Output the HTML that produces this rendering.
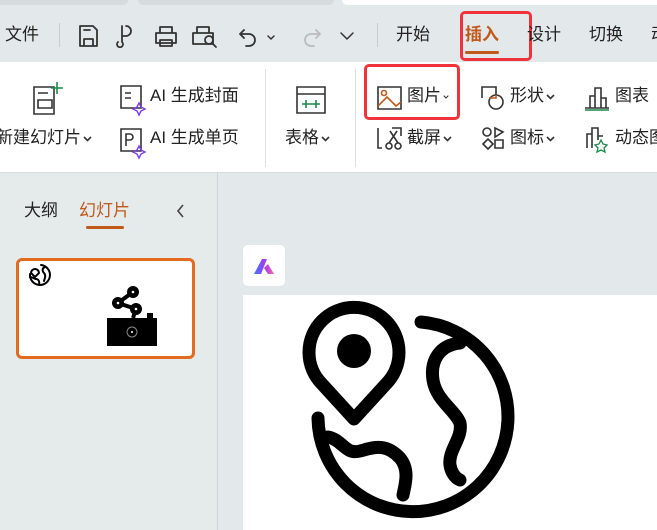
<!DOCTYPE html>
<html><head><meta charset="utf-8"><style>
*{margin:0;padding:0;box-sizing:border-box}
body{width:657px;height:530px;overflow:hidden;background:#e3e8ea;font-family:"Liberation Sans","Noto Sans CJK SC",sans-serif;position:relative;color:#222}
.a{position:absolute;white-space:nowrap}
.t{font-size:17px;line-height:22px}
.c{display:inline-block;width:9px;height:6px;margin-left:2px;vertical-align:middle}
</style></head><body>
<div class="a" style="left:0;top:0;width:128px;height:5px;background:#d6dbde;border-radius:0 0 6px 0"></div>
<div class="a" style="left:138px;top:0;width:196px;height:5px;background:#d6dbde;border-radius:0 0 6px 6px"></div>
<div class="a" style="left:342px;top:0;width:315px;height:5px;background:#fff;border-radius:0 0 0 6px"></div>
<!-- toolbar -->
<div class="a t" style="left:5px;top:24px">文件</div>
<div class="a" style="left:59px;top:23px;width:1px;height:24px;background:#c8cdd0"></div>
<svg class="a" style="left:76px;top:22px" width="290" height="28" fill="none" stroke="#333" stroke-width="1.8" stroke-linecap="round" stroke-linejoin="round">
<path d="M4 4h13l4 4v16H4z M8 24v-7h9v7 M8 8h6"/>
<path d="M50 4a5 5 0 0 1 0 10h-4v6a3 3 0 1 1-4 0 M46 14V4"/>
<path d="M84 5h12v6 M84 11V5 M80 11h20v10H80z M84 18h12v6H84z"/>
<path d="M121 5h12v6 M121 11V5 M117 11h20v11h-20z"/><circle cx="133" cy="18" r="4" stroke="#333"/><path d="M136 21l4 4" stroke="#333"/>
<path d="M168 8l-4 4 4 4 M164 12h9a6 6 0 0 1 0 12h-3"/><path d="M192 14l3 3 3-3" stroke-width="1.5"/>
<path d="M240 8l4 4-4 4 M244 12h-9a6 6 0 0 0 0 12h3" stroke="#bbb"/>
<path d="M265 11l6 6 6-6" stroke-width="1.5"/>
</svg>
<div class="a" style="left:377px;top:23px;width:1px;height:24px;background:#c8cdd0"></div>
<div class="a t" style="left:396px;top:24px">开始</div>
<div class="a t" style="left:465px;top:24px;color:#c0591a;font-weight:bold">插入</div>
<div class="a" style="left:465px;top:51px;width:34px;height:3px;background:#c0591a;border-radius:2px"></div>
<div class="a" style="left:460px;top:11px;width:72px;height:50px;border:3px solid #f0333a;border-radius:5px"></div>
<div class="a t" style="left:527px;top:24px">设计</div>
<div class="a t" style="left:589px;top:24px">切换</div>
<div class="a t" style="left:651px;top:24px">动</div>
<!-- ribbon -->
<div class="a" style="left:0;top:62px;width:657px;height:111px;background:#fff;border-bottom:1px solid #d8dcde"></div>
<svg class="a" style="left:0;top:62px" width="657" height="111" fill="none" stroke="#333" stroke-width="1.6">
<path d="M34 25h20v27H34z M38 31h10 M38 38h14v8H38z"/><path d="M57 20v12 M51 26h12" stroke="#1a8a4a"/>
<path d="M121 24h20v22h-20z M125 31h6 M125 36h6"/><path d="M139 41l2 4 4 2-4 2-2 4-2-4-4-2 4-2z" stroke="#7a3cf0" stroke-width="1.4"/>
<path d="M121 67h20v22h-20z M126 84V72h4a3 3 0 0 1 0 6h-4"/><path d="M139 84l2 4 4 2-4 2-2 4-2-4-4-2 4-2z" stroke="#7a3cf0" stroke-width="1.4"/>
<path d="M297 25h28v26h-28z M297 32h28"/><path d="M302 42h18 M306 38v8 M316 38v8" stroke="#1a8a4a"/>
<path d="M378 25h23v22h-23z"/><circle cx="384" cy="31" r="2.5" stroke="#c0591a"/><path d="M378 44l9-9 9 9 5-4" stroke="#c0591a"/>
<path d="M482 36v-11h14v8"/><circle cx="496" cy="40" r="7"/><path d="M489 36h7v-3" stroke="#c0591a"/>
<path d="M585 46h24 M590 46V34h5v12 M595 46V26h6v20 M601 46V36h5v10"/><path d="M585 48h24" stroke="#1a8a4a"/>
<path d="M378 66v20h4 M392 66h9v8"/><circle cx="389" cy="84" r="3"/><circle cx="398" cy="84" r="3"/><path d="M389 81l8-12 M398 81l-8-12"/>
<circle cx="487" cy="70" r="4"/><path d="M495 66l8 4-8 5z M483 82l5-5 5 5-5 5z M495 78h8v8h-8z"/>
<path d="M587 86V72h5v14 M592 80v-14h6v12 M598 74h5"/><path d="M601 78l2 4 4 1-3 3 1 4-4-2-4 2 1-4-3-3 4-1z" stroke="#1a8a4a" stroke-width="1.3"/>
</svg>
<div class="a t" style="left:-4px;top:127px">新建幻灯片<svg class="c" viewBox="0 0 9 6"><path d="M1 1l3.5 3.5L8 1" fill="none" stroke="#333" stroke-width="1.6"/></svg></div>
<div class="a t" style="left:150px;top:85px">AI 生成封面</div>
<div class="a t" style="left:150px;top:127px">AI 生成单页</div>
<div class="a" style="left:265px;top:69px;width:1px;height:98px;background:#dde0e2"></div>
<div class="a t" style="left:285px;top:127px">表格<svg class="c" viewBox="0 0 9 6"><path d="M1 1l3.5 3.5L8 1" fill="none" stroke="#333" stroke-width="1.6"/></svg></div>
<div class="a" style="left:355px;top:69px;width:1px;height:98px;background:#dde0e2"></div>
<div class="a t" style="left:407px;top:85px">图片<svg class="c" style="width:6px" viewBox="0 0 9 6"><path d="M1 1l3.5 3.5L8 1" fill="none" stroke="#333" stroke-width="1.6"/></svg></div>
<div class="a" style="left:364px;top:64px;width:96px;height:56px;border:3px solid #f0333a;border-radius:5px"></div>
<div class="a t" style="left:407px;top:127px">截屏<svg class="c" viewBox="0 0 9 6"><path d="M1 1l3.5 3.5L8 1" fill="none" stroke="#333" stroke-width="1.6"/></svg></div>
<div class="a t" style="left:510px;top:85px">形状<svg class="c" viewBox="0 0 9 6"><path d="M1 1l3.5 3.5L8 1" fill="none" stroke="#333" stroke-width="1.6"/></svg></div>
<div class="a t" style="left:510px;top:127px">图标<svg class="c" viewBox="0 0 9 6"><path d="M1 1l3.5 3.5L8 1" fill="none" stroke="#333" stroke-width="1.6"/></svg></div>
<div class="a t" style="left:615px;top:85px">图表</div>
<div class="a t" style="left:615px;top:127px">动态图</div>
<!-- left panel -->
<div class="a" style="left:0;top:173px;width:218px;height:357px;background:#e5eaeb;border-right:1px solid #d0d5d7"></div>
<div class="a t" style="left:24px;top:200px">大纲</div>
<div class="a t" style="left:79px;top:200px;color:#c0591a">幻灯片</div>
<div class="a" style="left:86px;top:226px;width:38px;height:3px;background:#c0591a;border-radius:2px"></div>
<svg class="a" style="left:175px;top:203px" width="10" height="16"><path d="M8 2L3 8l5 6" fill="none" stroke="#444" stroke-width="1.6"/></svg>
<div class="a" style="left:16px;top:258px;width:179px;height:101px;background:#fff;border:3px solid #e26b1f;border-radius:6px"></div>
<svg class="a" style="left:16px;top:258px" width="179" height="101">
<g fill="none" stroke="#000" stroke-width="2" stroke-linecap="round"><path d="M25 7a10 10 0 1 1-11 9"/><path d="M29 9c-3 1-3 4-1 6s1 5 0 8 M14 19c3 0 4 2 6 2s4 2 3 6"/><path d="M19 19l-4-4a4 4 0 1 1 8 0z" fill="#fff"/></g>
<rect x="91" y="60" width="50" height="28" fill="#000"/><rect x="131" y="55" width="6" height="6" fill="#000"/>
<circle cx="116" cy="74" r="5" fill="none" stroke="#888" stroke-width="1"/><circle cx="116" cy="74" r="1" fill="#fff"/>
<g fill="#000"><circle cx="117" cy="34" r="6"/><circle cx="102" cy="45" r="6"/><circle cx="120" cy="51" r="6"/></g>
<path d="M117 34L102 45L120 51L117 60" stroke="#000" stroke-width="4" fill="none"/>
<g fill="#fff"><circle cx="117" cy="34" r="1.3"/><circle cx="102" cy="45" r="1.3"/><circle cx="120" cy="51" r="1.3"/></g>
</svg>
<!-- canvas -->
<div class="a" style="left:243px;top:245px;width:42px;height:41px;background:#fff;border-radius:5px"></div>
<svg class="a" style="left:252px;top:254px" width="24" height="24"><defs><linearGradient id="g" x1="0" x2="1"><stop offset="0" stop-color="#3d7bff"/><stop offset=".5" stop-color="#9b3cf7"/><stop offset="1" stop-color="#ff5fa0"/></linearGradient></defs><path d="M2 20L10 5h5l-6 15z M12 14l4-4 6 10h-6z" fill="url(#g)"/></svg>
<div class="a" style="left:243px;top:295px;width:414px;height:235px;background:#fff"></div>
<svg class="a" style="left:0;top:0" width="657" height="530" fill="none" stroke="#000" stroke-width="13" stroke-linecap="round" stroke-linejoin="round">
<path d="M354 419L322 384A45 45 0 1 1 386 384Z"/>
<circle cx="354" cy="351" r="17" fill="#000" stroke="none"/>
<path d="M421 322A95 95 0 1 1 318 418"/>
<path d="M460 343C440 345 430 360 433 380C436 400 455 410 460 423C463 438 448 450 450 465C451 472 455 478 460 480"/>
<path d="M328 437C343 440 345 455 360 451C372 448 385 442 400 458C410 470 405 485 403 495"/>
</svg>
</body></html>
